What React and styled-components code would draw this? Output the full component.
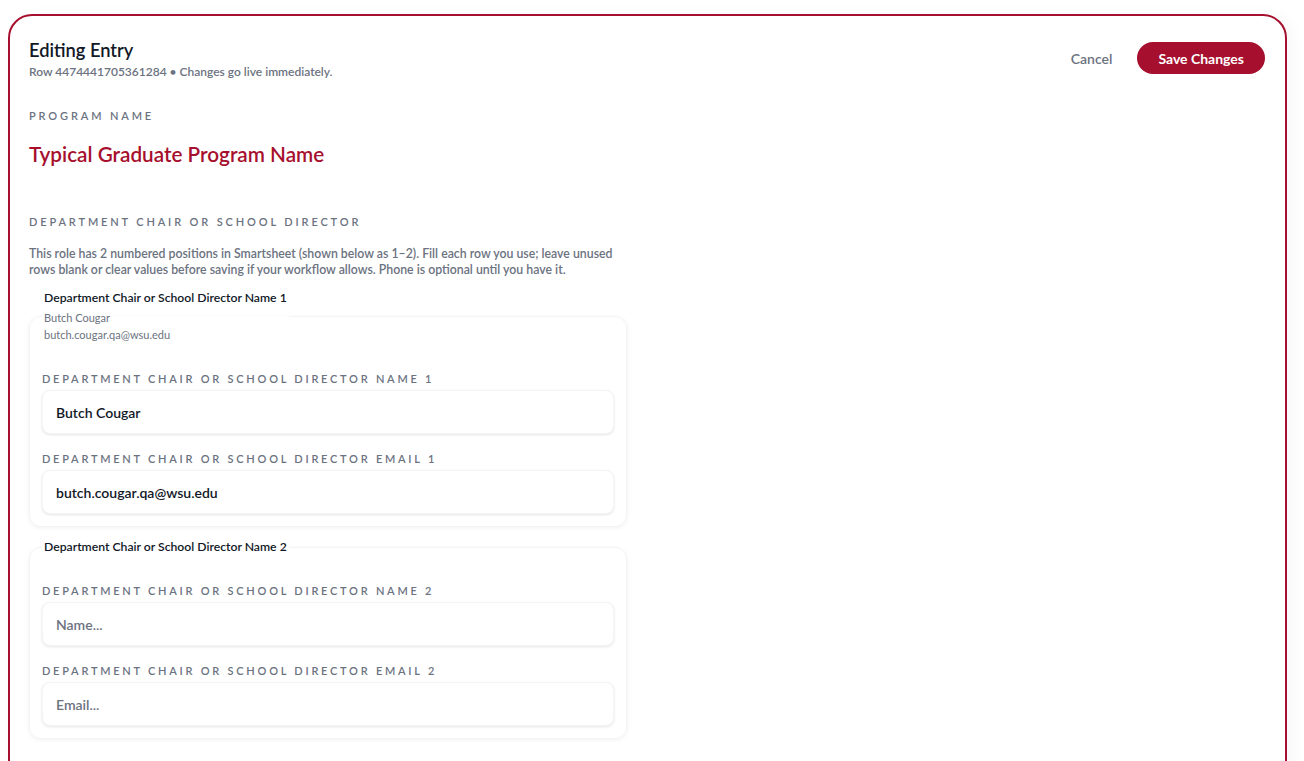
import styled, { createGlobalStyle } from "styled-components";

const CRIMSON = "#a60f2d";

const GlobalStyle = createGlobalStyle`
  * { box-sizing: border-box; }
  body {
    margin: 0;
    background: #ffffff;
    font-family: Lato, "Noto Sans", "Liberation Sans", sans-serif;
    color: #111827;
  }
`;

const roles = [
  {
    index: 1,
    name: "Butch Cougar",
    email: "butch.cougar.qa@wsu.edu",
  },
  { index: 2, name: "", email: "" },
];

function App() {
  return (
    <>
      <GlobalStyle />
      <Page>
        <Card>
          <Header>
            <div>
              <Title>Editing Entry</Title>
              <Subtitle>Row 4474441705361284 • Changes go live immediately.</Subtitle>
            </div>
            <Actions>
              <CancelButton>Cancel</CancelButton>
              <SaveButton>Save Changes</SaveButton>
            </Actions>
          </Header>

          <Section>
            <Label>Program Name</Label>
            <ProgramName>Typical Graduate Program Name</ProgramName>
          </Section>

          <RoleSection>
            <Label>Department Chair or School Director</Label>
            <Description>
              This role has 2 numbered positions in Smartsheet (shown below as 1–2). Fill each row
              you use; leave unused rows blank or clear values before saving if your workflow
              allows. Phone is optional until you have it.
            </Description>
            <Positions>
              {roles.map((role) => (
                <Position key={role.index}>
                  <Legend>
                    <LegendTitle>
                      Department Chair or School Director Name {role.index}
                    </LegendTitle>
                    {role.name && (
                      <SummaryList>
                        <Summary>{role.name}</Summary>
                        <Summary>{role.email}</Summary>
                      </SummaryList>
                    )}
                  </Legend>
                  <Fields>
                    <Field>
                      <FieldLabel>
                        Department Chair or School Director Name {role.index}
                      </FieldLabel>
                      <Input defaultValue={role.name} placeholder="Name..." />
                    </Field>
                    <Field>
                      <FieldLabel>
                        Department Chair or School Director Email {role.index}
                      </FieldLabel>
                      <Input defaultValue={role.email} placeholder="Email..." />
                    </Field>
                  </Fields>
                </Position>
              ))}
            </Positions>
          </RoleSection>
        </Card>
      </Page>
    </>
  );
}

const Page = styled.div`
  padding: 14px 17px 0 8px;
`;

const Card = styled.main`
  border: 2px solid ${CRIMSON};
  border-radius: 24px;
  background: #ffffff;
  padding: 20px 20px 60px 19px;
  box-shadow: 6px 0 14px rgba(0, 0, 0, 0.03);
`;

const Header = styled.header`
  display: flex;
  align-items: center;
  justify-content: space-between;
  margin-bottom: 28px;
`;

const Title = styled.h1`
  margin: 0;
  font-size: 18.3px;
  line-height: 28px;
  font-weight: 600;
  color: #111827;
`;

const Subtitle = styled.p`
  margin: 0;
  font-size: 12px;
  line-height: 16px;
  font-weight: 600;
  color: #6b7280;
`;

const Actions = styled.div`
  display: flex;
  align-items: center;
  gap: 13px;
`;

const CancelButton = styled.button`
  background: none;
  border: none;
  padding: 8px 12px;
  font-family: inherit;
  font-size: 14px;
  font-weight: 600;
  color: #6b7280;
  cursor: pointer;
`;

const SaveButton = styled.button`
  height: 32px;
  padding: 0 21px;
  border: none;
  border-radius: 999px;
  background: ${CRIMSON};
  color: #ffffff;
  font-family: inherit;
  font-size: 14px;
  font-weight: 700;
  cursor: pointer;
`;

const Section = styled.section`
  display: flex;
  flex-direction: column;
  gap: 16px;
  margin-bottom: 46px;
`;

const Label = styled.div`
  font-size: 11px;
  line-height: 16px;
  font-weight: 600;
  letter-spacing: 0.26em;
  text-transform: uppercase;
  color: #6b7280;
`;

const ProgramName = styled.div`
  font-size: 20.7px;
  line-height: 28px;
  font-weight: 600;
  color: ${CRIMSON};
`;

const RoleSection = styled.section`
  display: flex;
  flex-direction: column;
  width: 598px;
`;

const Description = styled.p`
  margin: 16px 0 12px;
  font-size: 12.3px;
  line-height: 16px;
  font-weight: 600;
  color: #6b7280;
`;

const Positions = styled.div`
  display: flex;
  flex-direction: column;
  gap: 12px;
`;

const Position = styled.fieldset`
  margin: 0;
  padding: 28px 12px 12px;
  border: 1px solid #f3f4f6;
  border-radius: 12px;
  box-shadow: 0 1px 4px rgba(0, 0, 0, 0.06);
  min-width: 0;
`;

const Legend = styled.legend`
  padding: 0 2px;
`;

const LegendTitle = styled.div`
  font-size: 12.2px;
  line-height: 16px;
  font-weight: 600;
  color: #111827;
`;

const SummaryList = styled.div`
  margin-top: 3px;
`;

const Summary = styled.div`
  font-size: 11px;
  line-height: 17px;
  color: #6b7280;
`;

const Fields = styled.div`
  display: flex;
  flex-direction: column;
  gap: 17px;
`;

const Field = styled.label`
  display: flex;
  flex-direction: column;
  gap: 3px;
`;

const FieldLabel = styled(Label)`
  letter-spacing: 0.25em;
`;

const Input = styled.input`
  height: 44px;
  padding: 0 13px;
  border: 1px solid #f3f4f6;
  border-radius: 8px;
  background: #ffffff;
  box-shadow: 0 1px 3px rgba(0, 0, 0, 0.1);
  font-family: inherit;
  font-size: 14px;
  font-weight: 600;
  color: #111827;
  outline: none;

  &::placeholder {
    color: #6b7280;
  }
`;

export default App;
